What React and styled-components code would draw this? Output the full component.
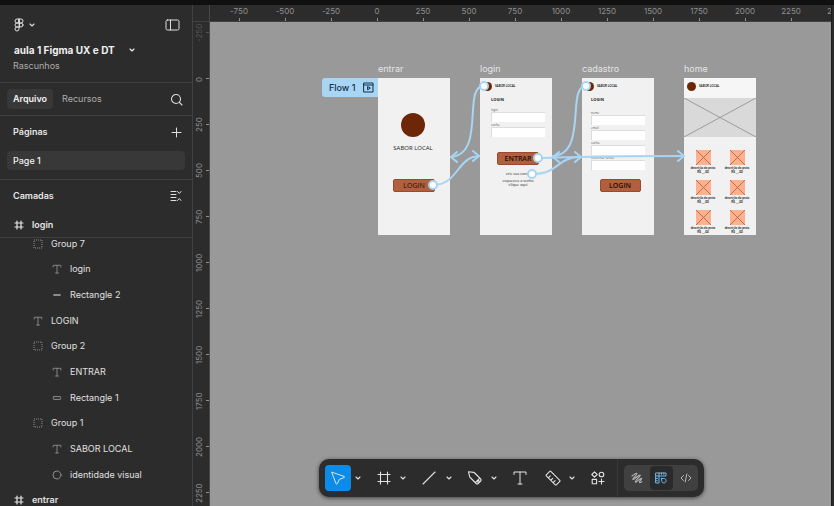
import React from "react";
import styled, { createGlobalStyle, css } from "styled-components";

const GlobalStyle = createGlobalStyle`
  *, *::before, *::after { box-sizing: border-box; }
  body { margin: 0; background: #2c2c2c; font-family: Inter, "Liberation Sans", sans-serif; }
  button, input { font: inherit; color: inherit; border: 0; padding: 0; margin: 0; background: none; }
  button { cursor: pointer; }
  svg { display: block; flex: none; }
`;

/* ---------- shell ---------- */

const Shell = styled.div`
  display: grid;
  grid-template-rows: 5px minmax(0, 1fr);
  height: 100vh;
  overflow: hidden;
  color: #e6e6e6;
`;

const TopStrip = styled.div`
  background: #101010;
`;

const Workspace = styled.div`
  display: grid;
  grid-template-columns: 193px minmax(0, 1fr) 3px;
  min-height: 0;
`;

const RightEdge = styled.div`
  background: #2a2a2a;
  border-left: 1px solid #1c1c1c;
`;

/* ---------- sidebar ---------- */

const Sidebar = styled.aside`
  display: flex;
  flex-direction: column;
  min-height: 0;
  overflow: hidden;
  background: #2c2c2c;
  border-right: 1px solid #414141;
  font-size: 9px;
  line-height: 12px;
`;

const FileHeader = styled.header`
  display: flex;
  flex-direction: column;
  height: 78px;
  padding: 11px 12px 0 13px;
  border-bottom: 1px solid #414141;
`;

const HeaderRow = styled.div`
  display: flex;
  align-items: center;
  justify-content: space-between;
  height: 17px;
`;

const IconButton = styled.button`
  display: flex;
  align-items: center;
  gap: 4px;
  color: #dedede;
`;

const FileTitle = styled.button`
  display: flex;
  align-items: center;
  gap: 14px;
  height: 16px;
  margin-top: 9px;
  padding-left: 1px;
  font-size: 10px;
  font-weight: 700;
  color: #f0f0f0;
`;

const FileFolder = styled.p`
  margin: 2px 0 0;
  color: #adadad;
`;

const TabBar = styled.nav`
  display: flex;
  align-items: center;
  height: 33px;
  padding: 0 9px 0 7px;
  border-bottom: 1px solid #414141;
`;

const Tab = styled.button`
  height: 20px;
  padding: 0 6px;
  margin-right: 3px;
  border-radius: 4px;
  color: #adadad;
  ${(p) => p.$active && css`
    background: #383838;
    color: #f2f2f2;
    font-weight: 600;
  `}
`;

const Spacer = styled.span`
  flex: 1;
`;

const SectionHeader = styled.div`
  display: flex;
  align-items: center;
  justify-content: space-between;
  height: 32px;
  padding: 0 10px 0 13px;
`;

const SectionTitle = styled.h2`
  margin: 0;
  font-size: 9px;
  font-weight: 600;
  color: #e6e6e6;
`;

const Pages = styled.section`
  height: 64px;
  border-bottom: 1px solid #414141;
`;

const PageItem = styled.button`
  display: block;
  width: calc(100% - 14px);
  height: 19px;
  margin: 3px 7px 0;
  padding: 0 6px;
  border-radius: 4px;
  background: #383838;
  color: #f0f0f0;
  font-weight: 500;
  text-align: left;
`;

const StickyLayer = styled.div`
  display: flex;
  align-items: center;
  gap: 8px;
  height: 26px;
  padding-left: 14px;
  font-weight: 600;
  border-bottom: 1px solid #414141;
`;

const LayerViewport = styled.div`
  flex: 1;
  min-height: 0;
  overflow: hidden;
`;

const LayerTree = styled.ul`
  display: flex;
  flex-direction: column;
  height: 282px;
  margin: -7px 0 0;
  padding: 0;
  list-style: none;
`;

const indents = [14, 33, 52];

const LayerRow = styled.li`
  display: flex;
  flex: 1;
  align-items: center;
  gap: 8px;
  padding-left: ${(p) => indents[p.$depth]}px;
  font-weight: ${(p) => (p.$depth ? 400 : 600)};
  color: #e0e0e0;
  svg { color: ${(p) => (p.$depth ? "#8c8c8c" : "#e6e6e6")}; }
`;

/* ---------- rulers and canvas ---------- */

const Stage = styled.main`
  display: grid;
  grid-template-columns: 17px minmax(0, 1fr);
  grid-template-rows: 17px minmax(0, 1fr);
  min-width: 0;
  min-height: 0;
`;

const RulerCorner = styled.div`
  background: #2c2c2c;
  border-right: 1px solid #484848;
  border-bottom: 1px solid #414141;
`;

const TopRuler = styled.div`
  display: flex;
  overflow: hidden;
  padding-left: 6px;
  background: #2c2c2c;
  border-bottom: 1px solid #414141;
  color: #8f8f8f;
  font-size: 8px;
  line-height: 13px;
`;

const TopMark = styled.span`
  flex: none;
  width: 46px;
  text-align: center;
  background: linear-gradient(#8f8f8f, #8f8f8f) 50% 100% / 1px 3px no-repeat;
`;

const SideRuler = styled.div`
  display: flex;
  flex-direction: column;
  overflow: hidden;
  padding-top: 34px;
  background: #2c2c2c;
  border-right: 1px solid #484848;
  color: #8f8f8f;
  font-size: 8px;
  line-height: 12px;
`;

const SideMark = styled.span`
  display: flex;
  flex: none;
  align-items: center;
  justify-content: center;
  height: 46px;
  padding-left: 4px;
  writing-mode: vertical-rl;
  transform: rotate(180deg);
  background: linear-gradient(#8f8f8f, #8f8f8f) 0 50% / 3px 1px no-repeat;
  ${(p) => p.$faded && css`
    opacity: 0.4;
    margin-top: -46px;
  `}
`;

const Canvas = styled.div`
  position: relative;
  overflow: hidden;
  background: #999999;
`;

const Boards = styled.div`
  display: flex;
  gap: 30px;
  padding: 40px 0 0 168px;
`;

const Board = styled.section`
  position: relative;
  flex: none;
  width: 72px;
`;

const BoardName = styled.h3`
  margin: 0;
  height: 16px;
  font-size: 9px;
  font-weight: 400;
  line-height: 13px;
  color: #e4e4e4;
`;

const Screen = styled.div`
  display: flex;
  flex-direction: column;
  height: 157px;
  background: #f1f1f1;
  color: #1c1c1c;
  font-family: "Open Sans", "Noto Sans", sans-serif;
  align-items: ${(p) => (p.$centered ? "center" : "stretch")};
`;

const FlowTag = styled.button`
  position: absolute;
  top: 16px;
  right: 100%;
  display: flex;
  align-items: center;
  justify-content: space-between;
  width: 56px;
  height: 19px;
  padding: 0 4px 0 7px;
  border-radius: 3px 0 0 3px;
  background: #a9d5f5;
  color: #12304a;
  font-size: 9px;
  font-weight: 500;
`;

const BrandDot = styled.span`
  flex: none;
  width: ${(p) => p.$size}px;
  height: ${(p) => p.$size}px;
  border-radius: 50%;
  background: #6d2707;
`;

const Splash = styled.div`
  display: flex;
  flex-direction: column;
  align-items: center;
  gap: 7px;
  width: 70px;
  height: 101px;
  padding-top: 35px;
  align-self: flex-start;
  font-size: 6px;
  font-weight: 500;
  line-height: 8px;
`;

const BrandBar = styled.div`
  display: flex;
  align-items: center;
  gap: 3px;
  height: 16px;
  padding-left: 3px;
  font-family: Lato, sans-serif;
  font-size: 3px;
  font-weight: 700;
  ${(p) => p.$tall && css`
    height: 20px;
    padding-bottom: 4px;
    background: #f6f6f6;
  `}
`;

const MockButton = styled.button`
  width: ${(p) => p.$width}px;
  height: 13px;
  border: 1px solid #994c2c;
  border-radius: 2px;
  background: #b15f3e;
  color: #220c04;
  font-size: 7px;
  font-weight: ${(p) => (p.$bold ? 600 : 500)};
  line-height: 10px;
`;

const Form = styled.form`
  display: flex;
  flex-direction: column;
  height: ${(p) => p.$height}px;
  padding: 0 ${(p) => 18 - p.$inset}px 0 ${(p) => p.$inset}px;
  margin: 0;
`;

const FormTitle = styled.h4`
  margin: 0;
  height: ${(p) => p.$height}px;
  font-size: 4px;
  font-weight: 700;
  line-height: 11px;
`;

const Field = styled.label`
  display: flex;
  flex-direction: column;
  margin-bottom: 1px;
  font-size: 3px;
  line-height: 4px;
  color: #555555;
  input {
    width: 100%;
    height: 10px;
    background: #ffffff;
    border: 1px solid #dddddd;
    border-width: 1px 0 0 1px;
  }
`;

const Actions = styled.div`
  display: flex;
  flex-direction: column;
  align-items: center;
  gap: 7px;
  padding-left: 4px;
`;

const Links = styled.div`
  display: flex;
  flex-direction: column;
  align-items: center;
  gap: 3px;
  font-family: Lato, sans-serif;
  font-size: 4px;
  line-height: 4px;
  text-align: center;
  a { color: #444444; text-decoration: none; }
`;

const Banner = styled.div`
  height: 39px;
  background: #d9d9d9;
  svg { width: 100%; height: 100%; }
`;

const Products = styled.div`
  display: grid;
  grid-template-columns: 34px 34px;
  justify-content: center;
  row-gap: 5px;
  padding-top: 13px;
`;

const Product = styled.figure`
  display: flex;
  flex-direction: column;
  align-items: center;
  height: 25px;
  margin: 0;
  figcaption {
    margin-top: 1px;
    font-family: Lato, sans-serif;
    font-size: 3px;
    font-weight: 700;
    line-height: 4px;
    text-align: center;
    white-space: nowrap;
  }
`;

const Connections = styled.svg`
  position: absolute;
  top: 0;
  left: 0;
  overflow: visible;
  pointer-events: none;
`;

/* ---------- toolbar ---------- */

const Dock = styled.div`
  position: absolute;
  right: 18px;
  bottom: 9px;
  left: 0;
  display: flex;
  justify-content: center;
`;

const Toolbar = styled.div`
  display: flex;
  align-items: center;
  height: 38px;
  padding: 0 6px;
  border-radius: 10px;
  background: #2c2c2c;
  color: #e2e2e2;
  box-shadow: 0 1px 4px rgba(0, 0, 0, 0.6);
`;

const Tools = styled.div`
  display: flex;
  justify-content: space-between;
  width: 286px;
`;

const ToolGroup = styled.div`
  display: flex;
  align-items: center;
`;

const ToolButton = styled.button`
  display: grid;
  place-items: center;
  width: 26px;
  height: 26px;
  border-radius: 4px;
  background: ${(p) => (p.$active ? "#0c8ce9" : "transparent")};
`;

const MenuButton = styled.button`
  display: grid;
  place-items: center;
  width: 13px;
  height: 26px;
`;

const Divider = styled.span`
  width: 1px;
  height: 38px;
  margin: 0 6px;
  background: #383838;
`;

const ModeSwitch = styled.div`
  display: flex;
  align-items: center;
  justify-content: space-between;
  width: 74px;
  height: 26px;
  padding: 0 1px;
  border-radius: 5px;
  background: #404040;
`;

const ModeButton = styled.button`
  display: grid;
  place-items: center;
  width: 23px;
  height: 24px;
  border-radius: 4px;
  color: #b8b8b8;
  ${(p) => p.$active && css`
    background: #2a2a2a;
    color: #6fb7ea;
  `}
`;

/* ---------- icons ---------- */

const Icon = ({ w = 12, h = w, sw = 1, children }) => (
  <svg width={w} height={h} viewBox={`0 0 ${w} ${h}`} fill="none" stroke="currentColor"
    strokeWidth={sw} strokeLinecap="round" strokeLinejoin="round" aria-hidden="true">
    {children}
  </svg>
);

const Chevron = () => <Icon w={6} h={4} sw={1.1}><path d="M1 1l2 2 2-2" /></Icon>;

const FigmaLogo = () => (
  <Icon w={12} h={14}>
    <path d="M6 1H4a2 2 0 0 0 0 4h2zM6 1h2a2 2 0 0 1 0 4H6zM6 5H4a2 2 0 0 0 0 4h2zM6 9H4a2 2 0 1 0 2 2z" />
    <circle cx="8" cy="7" r="2" />
  </Icon>
);

const PanelIcon = () => (
  <Icon w={15} h={12}><rect x="1" y="1" width="13" height="10" rx="1.5" /><path d="M5.5 1v10" /></Icon>
);

const SearchIcon = () => <Icon w={13} sw={1.1}><circle cx="6" cy="6" r="4.5" /><path d="M9.2 9.2L12 12" /></Icon>;

const PlusIcon = () => <Icon w={11}><path d="M5.5 1v9M1 5.5h9" /></Icon>;

const CollapseIcon = () => (
  <Icon w={12}><path d="M1 1.500h5M1 4.500h5M1 7.500h5M1 10.500h5M7.500 1.500L9.300 3.500l1.700-2M7.500 10.500l1.800-2 1.700 2" /></Icon>
);

const HashIcon = () => <Icon w={10} sw={1.2}><path d="M3 1v8M7 1v8M1 3h8M1 7h8" /></Icon>;

const layerIcons = {
  frame: <HashIcon />,
  group: <Icon w={10}><rect x="1" y="1" width="8" height="8" strokeDasharray="1 1" strokeLinecap="butt" /></Icon>,
  text: <Icon w={10} sw={0.9}><path d="M1.200 3V1.300h7.600V3M5 1.300v7.700M3.600 9h2.800" /></Icon>,
  line: <Icon w={10} sw={1.8}><path d="M2 5h6" /></Icon>,
  rect: <Icon w={10}><rect x="1.300" y="3.600" width="7.400" height="2.800" rx="0.6" /></Icon>,
  ellipse: <Icon w={10}><circle cx="5" cy="5" r="4" /></Icon>,
};

const toolIcons = {
  move: <Icon w={16}><path d="M2 2.200l12 4.200c.7.3.7.9 0 1.200L9.400 9.400l-2.200 4.400c-.3.6-.9.6-1.100 0z" /></Icon>,
  frame: <Icon w={14} sw={1.1}><path d="M3.500 1v12M10.500 1v12M1 3.500h12M1 10.500h12" /></Icon>,
  line: <Icon w={14} sw={1.1}><path d="M1 13L13 1" /></Icon>,
  pen: (
    <Icon w={16} sw={1.1}>
      <path d="M1.500 1.800l5 .6c.5.100.9.300 1.200.6l6 6c.7.7.7 1.300 0 2l-2.500 2.500c-.7.7-1.300.7-2 0l-6-6c-.3-.3-.5-.7-.6-1.200zM8.300 12.600l4.500-4.500" />
      <circle cx="11.200" cy="11.300" r="0.9" />
    </Icon>
  ),
  text: <Icon w={14}><path d="M1 3.500V1h12v2.500M7 1v12M5 13h4" /></Icon>,
  measure: (
    <Icon w={16} sw={1.1}>
      <path d="M1.300 4.800l3.500-3.500c.3-.3.7-.3 1 0l9 9c.3.3.3.7 0 1l-3.500 3.500c-.3.300-.7.300-1 0l-9-9c-.3-.300-.3-.7 0-1zM3.600 7.600l1.700-1.700M6 10l1.700-1.700M8.400 12.400l1.700-1.700" />
    </Icon>
  ),
  component: (
    <Icon w={14} sw={1.1}>
      <path d="M3.500.8l2.700 2.700-2.700 2.700L.8 3.500zM10.500 8v5M8 10.500h5" />
      <circle cx="10.500" cy="3.500" r="2.300" /><rect x="1.200" y="8.400" width="4.400" height="4.400" />
    </Icon>
  ),
};

const DrawIcon = () => (
  <Icon w={12} sw={1.1}>
    <path d="M1 4.200C3 2.500 5.200.8 5.900 1.400 6.800 2.300 1 6.600 1.800 7.500 2.600 8.400 8.400 2.200 9.200 3.100 10 4 3.500 9 4.300 10 5.100 11 9.800 5.600 10.600 6.400 11.300 7.100 8 9.300 8.500 10.200 8.800 10.800 9.800 10.400 10.800 9.800" />
  </Icon>
);

const DesignIcon = () => (
  <Icon w={12}>
    <path d="M1 1h10v3H4v7H1zM4 1v3H1M6.500 1v1.300M8.800 1v1.300M1 6.500h1.300M1 8.800h1.300M6.500 6.500h2.300c3 0 3 4.500 0 4.500-2 0-2.300-2-2.300-4.500z" />
  </Icon>
);

const CodeIcon = () => <Icon w={12}><path d="M3.500 3.500L1 6l2.500 2.500M8.500 3.500L11 6 8.500 8.500M6.800 2L5.200 10" /></Icon>;

const PlayIcon = () => (
  <Icon w={11}><rect x="1" y="1" width="9" height="9" /><path d="M1 3h9M4.600 4.800v3l2.500-1.500z" /></Icon>
);

const Crossed = ({ size, fill, line }) => (
  <svg width={size} height={size} viewBox="0 0 15 15" preserveAspectRatio="none" aria-hidden="true">
    <rect width="15" height="15" fill={fill} />
    <path d="M0 0L15 15M15 0L0 15" stroke={line} strokeWidth="0.8" vectorEffect="non-scaling-stroke" />
  </svg>
);

/* ---------- data ---------- */

const layers = [
  ["Group 7", "group", 1],
  ["login", "text", 2],
  ["Rectangle 2", "line", 2],
  ["LOGIN", "text", 1],
  ["Group 2", "group", 1],
  ["ENTRAR", "text", 2],
  ["Rectangle 1", "rect", 2],
  ["Group 1", "group", 1],
  ["SABOR LOCAL", "text", 2],
  ["identidade visual", "ellipse", 2],
  ["entrar", "frame", 0],
];

const topMarks = [-750, -500, -250, 0, 250, 500, 750, 1000, 1250, 1500, 1750, 2000, 2250, 2500];
const sideMarks = [0, 250, 500, 750, 1000, 1250, 1500, 1750, 2000, 2250];

const tools = [
  ["move", "Mover", true],
  ["frame", "Frame", true],
  ["line", "Linha", true],
  ["pen", "Caneta", true],
  ["text", "Texto", false],
  ["measure", "Medir", true],
  ["component", "Componentes", false],
];

const links = [
  "M433 185C458 185 457 157 479 156",
  "M484 86C462 86 486 154 451 157",
  "M538 158C560 158 560 156 684 156",
  "M532 174C560 174 556 157 581 157",
  "M586 86C566 86 588 154 553 156",
];
const arrows = [
  "M473 151l6 5-6 5", "M457 152l-6 5 6 5", "M678 151l6 5-6 5", "M575 152l6 5-6 5", "M559 152l-6 5 6 5",
];
const handles = [[433, 185], [484, 86], [538, 158], [532, 174], [586, 86]];

const Brand = ({ tall }) => (
  <BrandBar $tall={tall}><BrandDot $size={9} />SABOR LOCAL</BrandBar>
);

const TextField = ({ label }) => (
  <Field>{label}<input type="text" /></Field>
);

export default function App() {
  return (
    <>
      <GlobalStyle />
      <Shell>
        <TopStrip />
        <Workspace>
          <Sidebar>
            <FileHeader>
              <HeaderRow>
                <IconButton aria-label="Menu principal"><FigmaLogo /><Chevron /></IconButton>
                <IconButton aria-label="Painel lateral"><PanelIcon /></IconButton>
              </HeaderRow>
              <FileTitle>aula 1 Figma UX e DT<Chevron /></FileTitle>
              <FileFolder>Rascunhos</FileFolder>
            </FileHeader>
            <TabBar>
              <Tab $active>Arquivo</Tab>
              <Tab>Recursos</Tab>
              <Spacer />
              <IconButton aria-label="Buscar"><SearchIcon /></IconButton>
            </TabBar>
            <Pages>
              <SectionHeader>
                <SectionTitle>Páginas</SectionTitle>
                <IconButton aria-label="Adicionar página"><PlusIcon /></IconButton>
              </SectionHeader>
              <PageItem>Page 1</PageItem>
            </Pages>
            <SectionHeader>
              <SectionTitle>Camadas</SectionTitle>
              <IconButton aria-label="Recolher camadas"><CollapseIcon /></IconButton>
            </SectionHeader>
            <StickyLayer><HashIcon />login</StickyLayer>
            <LayerViewport>
              <LayerTree>
                {layers.map(([name, icon, depth]) => (
                  <LayerRow key={name} $depth={depth}>{layerIcons[icon]}{name}</LayerRow>
                ))}
              </LayerTree>
            </LayerViewport>
          </Sidebar>

          <Stage>
            <RulerCorner />
            <TopRuler>{topMarks.map((n) => <TopMark key={n}>{n}</TopMark>)}</TopRuler>
            <SideRuler>
              <SideMark $faded>-250</SideMark>
              {sideMarks.map((n) => <SideMark key={n}>{n}</SideMark>)}
            </SideRuler>
            <Canvas>
              <Boards>
                <Board>
                  <BoardName>entrar</BoardName>
                  <FlowTag>Flow 1<PlayIcon /></FlowTag>
                  <Screen $centered>
                    <Splash><BrandDot $size={24} />SABOR LOCAL</Splash>
                    <MockButton $width={42}>LOGIN</MockButton>
                  </Screen>
                </Board>
                <Board>
                  <BoardName>login</BoardName>
                  <Screen>
                    <Brand />
                    <Form $height={58} $inset={11}>
                      <FormTitle $height={14}>LOGIN</FormTitle>
                      <TextField label="login" />
                      <TextField label="senha" />
                    </Form>
                    <Actions>
                      <MockButton $width={42} $bold>ENTRAR</MockButton>
                      <Links>
                        <a href="#conta">crie sua conta</a>
                        <a href="#senha">esqueceu a senha<br />clique aqui</a>
                      </Links>
                    </Actions>
                  </Screen>
                </Board>
                <Board>
                  <BoardName>cadastro</BoardName>
                  <Screen>
                    <Brand />
                    <Form $height={85} $inset={9}>
                      <FormTitle $height={17}>LOGIN</FormTitle>
                      <TextField label="nome" />
                      <TextField label="email" />
                      <TextField label="senha" />
                      <TextField label="confirmar senha" />
                    </Form>
                    <Actions>
                      <MockButton $width={41} $bold>LOGIN</MockButton>
                    </Actions>
                  </Screen>
                </Board>
                <Board>
                  <BoardName>home</BoardName>
                  <Screen>
                    <Brand tall />
                    <Banner><Crossed fill="#d9d9d9" line="#8c8c8c" /></Banner>
                    <Products>
                      {[1, 2, 3, 4, 5, 6].map((n) => (
                        <Product key={n}>
                          <Crossed size={15} fill="#ffb08c" line="#a06048" />
                          <figcaption>descrição do prato<br />R$ __,00</figcaption>
                        </Product>
                      ))}
                    </Products>
                  </Screen>
                </Board>
              </Boards>

              <Connections width="622" height="484" fill="none" stroke="#a9d5f5" strokeWidth="2"
                strokeLinecap="round" strokeLinejoin="round" aria-hidden="true">
                <g transform="translate(-210 -22)">
                  {links.concat(arrows).map((d) => <path key={d} d={d} />)}
                  {handles.map(([x, y]) => <circle key={`${x}-${y}`} cx={x} cy={y} r="4" fill="#ffffff" />)}
                </g>
              </Connections>

              <Dock>
                <Toolbar role="toolbar">
                  <Tools>
                    {tools.map(([id, label, menu], i) => (
                      <ToolGroup key={id}>
                        <ToolButton $active={i === 0} aria-label={label}>{toolIcons[id]}</ToolButton>
                        {menu && <MenuButton aria-label={`${label}: opções`}><Chevron /></MenuButton>}
                      </ToolGroup>
                    ))}
                  </Tools>
                  <Divider />
                  <ModeSwitch>
                    <ModeButton aria-label="Desenhar"><DrawIcon /></ModeButton>
                    <ModeButton $active aria-label="Design"><DesignIcon /></ModeButton>
                    <ModeButton aria-label="Código"><CodeIcon /></ModeButton>
                  </ModeSwitch>
                </Toolbar>
              </Dock>
            </Canvas>
          </Stage>
          <RightEdge />
        </Workspace>
      </Shell>
    </>
  );
}
